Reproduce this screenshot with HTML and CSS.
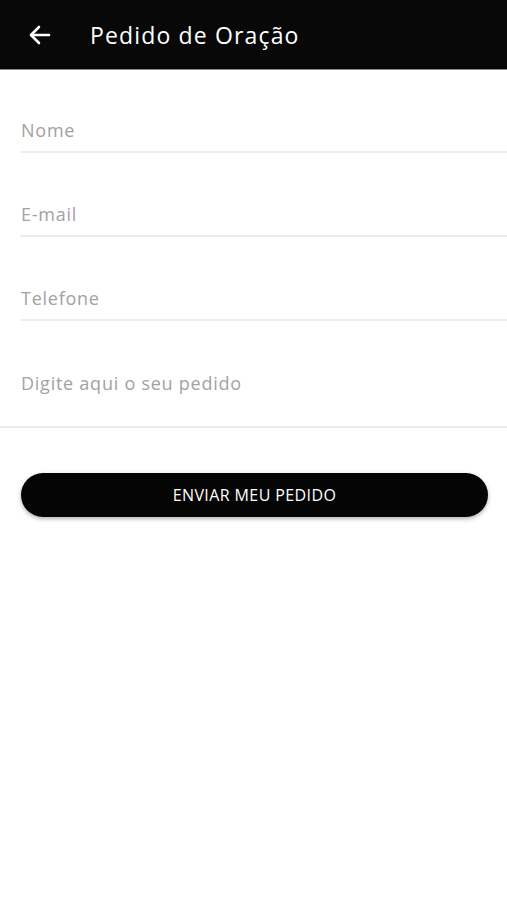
FILE: index.html
```html
<!DOCTYPE html>
<html lang="pt">
<head>
<meta charset="utf-8">
<title>Pedido de Oração</title>
<link rel="stylesheet" href="styles.css">
</head>
<body>
<header class="appbar">
  <button class="back" aria-label="Voltar">
    <svg width="22" height="20" viewBox="0 0 22 20" fill="none" stroke="#fff" stroke-width="2.6" stroke-linecap="round" stroke-linejoin="round">
      <path d="M20 10H2.5"/>
      <path d="M10 2L2 10L10 18"/>
    </svg>
  </button>
  <h1 class="title">Pedido de Oração</h1>
</header>
<main class="form">
  <div class="field"><span class="placeholder">Nome</span></div>
  <div class="field"><span class="placeholder">E-mail</span></div>
  <div class="field"><span class="placeholder">Telefone</span></div>
  <div class="field field-area"><span class="placeholder">Digite aqui o seu pedido</span></div>
  <div class="actions">
    <button class="submit">ENVIAR MEU PEDIDO</button>
  </div>
</main>
</body>
</html>
```
FILE: styles.css
```css
* { box-sizing: border-box; }
html, body { margin: 0; padding: 0; background: #fff; }
body {
  font-family: "Open Sans", "Noto Sans", sans-serif;
  width: 507px;
  height: 900px;
  overflow: hidden;
}
.appbar {
  height: 70px;
  background: #080808;
  border-bottom: 1px solid #8a8a8a;
  display: flex;
  align-items: center;
  padding-left: 29px;
}
.back {
  background: none;
  border: 0;
  padding: 0;
  width: 22px;
  height: 20px;
  display: flex;
  margin-top: 1px;
}
.title {
  margin: 0 0 0 39px;
  color: #fff;
  font-size: 23px;
  font-weight: 400;
  letter-spacing: 1.15px;
}
.form { display: flex; flex-direction: column; }
.field {
  margin-left: 20px;
  height: 84px;
  border-bottom: 2px solid #ececec;
  display: flex;
  align-items: flex-end;
  padding-bottom: 10px;
}
.field:first-child { height: 83px; }
.placeholder {
  color: #a2a2a2;
  font-size: 18px;
  line-height: 22px;
  letter-spacing: 0.75px;
  padding-left: 1px;
}
.field-area {
  margin-left: 0;
  padding-left: 20px;
  height: 107px;
  align-items: flex-start;
  padding-top: 51px;
  padding-bottom: 0;
}
.actions {
  padding: 45px 19px 0 21px;
}
.submit {
  width: 100%;
  height: 44px;
  border: 0;
  border-radius: 22px;
  background: #050505;
  color: #fff;
  font-family: "Open Sans", "Noto Sans", sans-serif;
  font-size: 16px;
  letter-spacing: 0.4px;
  box-shadow: 0 2px 4px rgba(0,0,0,0.3);
}
```
